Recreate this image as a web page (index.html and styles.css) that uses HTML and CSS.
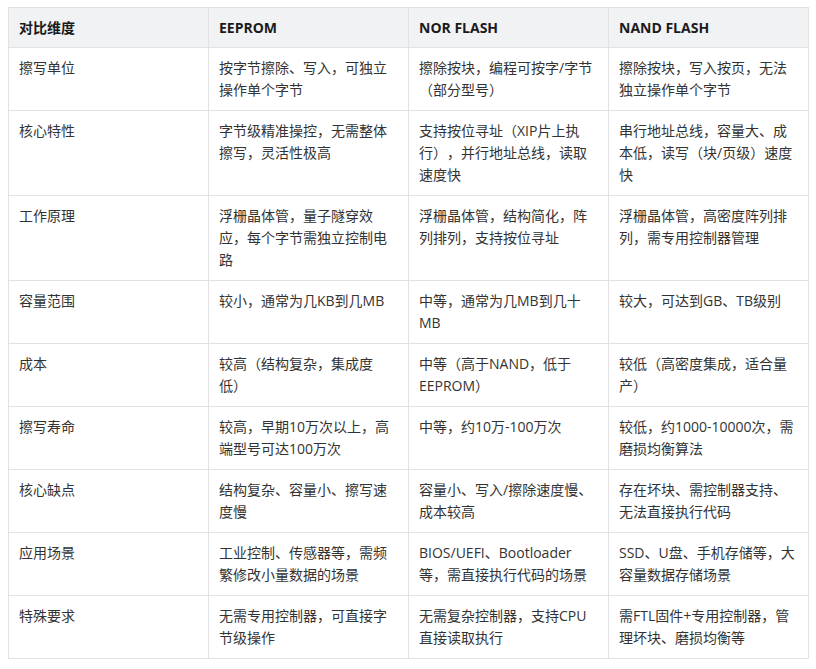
FILE: index.html
```html
<!DOCTYPE html>
<html lang="zh-CN">
<head>
<meta charset="utf-8">
<link rel="stylesheet" href="styles.css">
</head>
<body>
<table class="cmp">
<colgroup><col class="c"><col class="c"><col class="c"><col class="c"></colgroup>
<thead>
<tr><th>对比维度</th><th>EEPROM</th><th>NOR FLASH</th><th>NAND FLASH</th></tr>
</thead>
<tbody>
<tr><td>擦写单位</td><td>按字节擦除、写入，可独立操作单个字节</td><td>擦除按块，编程可按字/字节（部分型号）</td><td>擦除按块，写入按页，无法独立操作单个字节</td></tr>
<tr><td>核心特性</td><td>字节级精准操控，无需整体擦写，灵活性极高</td><td>支持按位寻址（XIP片上执行），并行地址总线，读取速度快</td><td>串行地址总线，容量大、成本低，读写（块/页级）速度快</td></tr>
<tr><td>工作原理</td><td>浮栅晶体管，量子隧穿效应，每个字节需独立控制电路</td><td>浮栅晶体管，结构简化，阵列排列，支持按位寻址</td><td>浮栅晶体管，高密度阵列排列，需专用控制器管理</td></tr>
<tr><td>容量范围</td><td>较小，通常为几KB到几MB</td><td>中等，通常为几MB到几十MB</td><td>较大，可达到GB、TB级别</td></tr>
<tr><td>成本</td><td>较高（结构复杂，集成度低）</td><td>中等（高于NAND，低于EEPROM）</td><td>较低（高密度集成，适合量产）</td></tr>
<tr><td>擦写寿命</td><td>较高，早期10万次以上，高端型号可达100万次</td><td>中等，约10万-100万次</td><td>较低，约1000-10000次，需磨损均衡算法</td></tr>
<tr><td>核心缺点</td><td>结构复杂、容量小、擦写速度慢</td><td>容量小、写入/擦除速度慢、成本较高</td><td>存在坏块、需控制器支持、无法直接执行代码</td></tr>
<tr><td>应用场景</td><td>工业控制、传感器等，需频繁修改小量数据的场景</td><td>BIOS/UEFI、Bootloader等，需直接执行代码的场景</td><td>SSD、U盘、手机存储等，大容量数据存储场景</td></tr>
<tr><td>特殊要求</td><td>无需专用控制器，可直接字节级操作</td><td>无需复杂控制器，支持CPU直接读取执行</td><td>需FTL固件+专用控制器，管理坏块、磨损均衡等</td></tr>
</tbody>
</table>
</body>
</html>
```
FILE: styles.css
```css
html, body {
  margin: 0;
  padding: 0;
  background: #ffffff;
}
body {
  padding: 7px 8px;
  font-family: "Open Sans", "Noto Sans CJK SC", sans-serif;
  font-size: 14px;
  color: #333333;
  text-spacing-trim: space-all;
}
.cmp {
  border-collapse: collapse;
  table-layout: fixed;
  width: 801px;
}
.c {
  width: 200px;
}
.cmp th,
.cmp td {
  border: 1px solid #e2e2e4;
  text-align: left;
  vertical-align: top;
}
.cmp th {
  background: #f1f2f4;
  color: #1a1a1a;
  font-weight: 700;
  line-height: 21px;
  padding: 9px 10px;
}
.cmp td {
  line-height: 22px;
  padding: 9px 10px;
}
```
